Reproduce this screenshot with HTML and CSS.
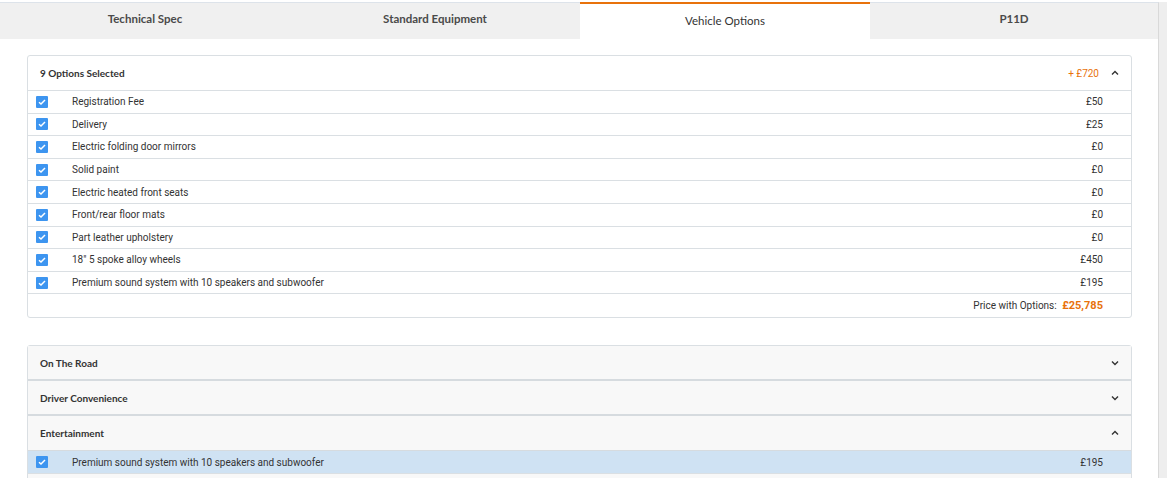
FILE: index.html
```html
<!DOCTYPE html>
<html lang="en">
<head>
  <meta charset="UTF-8" />
  <title>Vehicle Options</title>
  <link rel="stylesheet" href="styles.css">
</head>
<body>
  <div class="page">
    <div class="main">
      <div class="tabs">
        <div class="tab">Technical Spec</div>
        <div class="tab">Standard Equipment</div>
        <div class="tab active">Vehicle Options</div>
        <div class="tab">P11D</div>
      </div>

      <div class="content">
        <div class="panel">
          <div class="panel-head">
            <span class="title">9 Options Selected</span>
            <span class="extra">+ £720</span>
            <svg class="chev" width="8" height="6" viewBox="0 0 8 6"><path d="M1 4.5 L4 1.5 L7 4.5" fill="none" stroke="#333" stroke-width="1.4"/></svg>
          </div>
          <div class="row"><span class="check"><svg width="12" height="12" viewBox="0 0 12 12"><path d="M3 6.2 L5 8 L9 4" fill="none" stroke="#fff" stroke-width="1.5"/></svg></span><span class="name">Registration Fee</span><span class="price">£50</span></div>
          <div class="row"><span class="check"><svg width="12" height="12" viewBox="0 0 12 12"><path d="M3 6.2 L5 8 L9 4" fill="none" stroke="#fff" stroke-width="1.5"/></svg></span><span class="name">Delivery</span><span class="price">£25</span></div>
          <div class="row"><span class="check"><svg width="12" height="12" viewBox="0 0 12 12"><path d="M3 6.2 L5 8 L9 4" fill="none" stroke="#fff" stroke-width="1.5"/></svg></span><span class="name">Electric folding door mirrors</span><span class="price">£0</span></div>
          <div class="row"><span class="check"><svg width="12" height="12" viewBox="0 0 12 12"><path d="M3 6.2 L5 8 L9 4" fill="none" stroke="#fff" stroke-width="1.5"/></svg></span><span class="name">Solid paint</span><span class="price">£0</span></div>
          <div class="row"><span class="check"><svg width="12" height="12" viewBox="0 0 12 12"><path d="M3 6.2 L5 8 L9 4" fill="none" stroke="#fff" stroke-width="1.5"/></svg></span><span class="name">Electric heated front seats</span><span class="price">£0</span></div>
          <div class="row"><span class="check"><svg width="12" height="12" viewBox="0 0 12 12"><path d="M3 6.2 L5 8 L9 4" fill="none" stroke="#fff" stroke-width="1.5"/></svg></span><span class="name">Front/rear floor mats</span><span class="price">£0</span></div>
          <div class="row"><span class="check"><svg width="12" height="12" viewBox="0 0 12 12"><path d="M3 6.2 L5 8 L9 4" fill="none" stroke="#fff" stroke-width="1.5"/></svg></span><span class="name">Part leather upholstery</span><span class="price">£0</span></div>
          <div class="row"><span class="check"><svg width="12" height="12" viewBox="0 0 12 12"><path d="M3 6.2 L5 8 L9 4" fill="none" stroke="#fff" stroke-width="1.5"/></svg></span><span class="name">18" 5 spoke alloy wheels</span><span class="price">£450</span></div>
          <div class="row"><span class="check"><svg width="12" height="12" viewBox="0 0 12 12"><path d="M3 6.2 L5 8 L9 4" fill="none" stroke="#fff" stroke-width="1.5"/></svg></span><span class="name">Premium sound system with 10 speakers and subwoofer</span><span class="price">£195</span></div>
          <div class="total">Price with Options: <strong>£25,785</strong></div>
        </div>

        <div class="panel groups">
          <div class="group-head">
            <span class="title">On The Road</span>
            <svg class="chev" width="8" height="6" viewBox="0 0 8 6"><path d="M1 1.5 L4 4.5 L7 1.5" fill="none" stroke="#333" stroke-width="1.4"/></svg>
          </div>
          <div class="group-head">
            <span class="title">Driver Convenience</span>
            <svg class="chev" width="8" height="6" viewBox="0 0 8 6"><path d="M1 1.5 L4 4.5 L7 1.5" fill="none" stroke="#333" stroke-width="1.4"/></svg>
          </div>
          <div class="group-head">
            <span class="title">Entertainment</span>
            <svg class="chev" width="8" height="6" viewBox="0 0 8 6"><path d="M1 4.5 L4 1.5 L7 4.5" fill="none" stroke="#333" stroke-width="1.4"/></svg>
          </div>
          <div class="row selected"><span class="check"><svg width="12" height="12" viewBox="0 0 12 12"><path d="M3 6.2 L5 8 L9 4" fill="none" stroke="#fff" stroke-width="1.5"/></svg></span><span class="name">Premium sound system with 10 speakers and subwoofer</span><span class="price">£195</span></div>
          <div class="row"></div>
        </div>
      </div>
    </div>
    <div class="gutter"></div>
  </div>
</body>
</html>
```

FILE: styles.css
```css
* {
  margin: 0;
  padding: 0;
  box-sizing: border-box;
}

body {
  font-family: Roboto, Arial, sans-serif;
  color: #333;
  background: #fff;
  overflow: hidden;
}

.page {
  display: flex;
  height: 478px;
  padding-top: 2px;
}

.main {
  width: 1159px;
  border-top: 1px solid #dde3ea;
  border-right: 1px solid #d9d9d9;
}

.gutter {
  flex: 1;
  background: #eeeeee;
}

.tabs {
  display: flex;
  height: 36px;
  background: #f0f0f0;
}

.tab {
  width: 290px;
  text-align: center;
  font-family: Lato, "Open Sans", sans-serif;
  font-weight: bold;
  font-size: 11.5px;
  color: #4a4a4a;
  padding-top: 9px;
}

.tab:last-child {
  flex: 1;
}

.tab.active {
  background: #fff;
  border-top: 2px solid #e8720c;
  font-weight: normal;
  color: #333;
  padding-top: 10px;
  margin-top: -1px;
}

.content {
  padding: 16px 26px 0 27px;
}

.panel {
  border: 1px solid #dadfe3;
  border-radius: 3px;
  background: #fff;
  margin-bottom: 27px;
}

.panel-head,
.group-head {
  display: flex;
  align-items: center;
  height: 35px;
  padding: 0 12px;
  font-family: Lato, "Open Sans", sans-serif;
}

.panel-head {
  border-bottom: 1px solid #dadfe3;
}

.title {
  flex: 1;
  font-weight: bold;
  font-size: 10px;
  color: #333;
}

.extra {
  color: #e8720c;
  font-family: Roboto, sans-serif;
  font-size: 10px;
  margin-right: 12px;
}

.chev {
  display: block;
}

.row {
  display: flex;
  align-items: center;
  height: 22.6px;
  border-bottom: 1px solid #dadfe3;
  font-size: 10px;
  padding: 0 28px 0 8px;
}

.check {
  width: 12px;
  height: 12px;
  background: #3d95f0;
  border-radius: 1px;
  margin-right: 24px;
}

.check svg {
  display: block;
}

.name {
  flex: 1;
}

.total {
  height: 23px;
  line-height: 23px;
  text-align: right;
  font-size: 10px;
  padding-right: 28px;
}

.total strong {
  color: #e8720c;
  font-size: 11px;
  margin-left: 3px;
}

.groups {
  background: #f8f8f8;
  border-radius: 3px 3px 0 0;
}

.group-head {
  background: #f8f8f8;
  border-bottom: 2px solid #d6dbdf;
  height: 35px;
}

.group-head:nth-child(3) {
  border-bottom: 1px solid #d6dbdf;
}

.row.selected {
  background: #cfe2f3;
}

.groups .row:last-child {
  background: #f8f8f8;
  border-bottom: none;
}
```
